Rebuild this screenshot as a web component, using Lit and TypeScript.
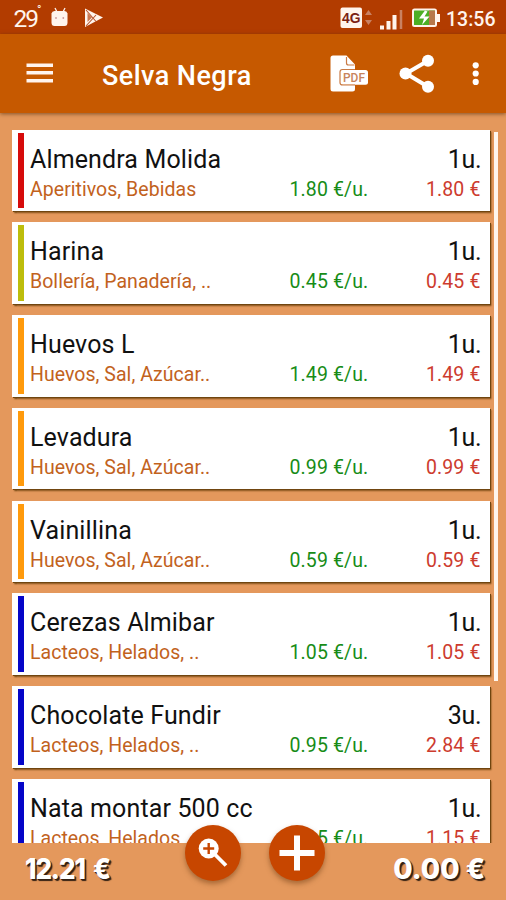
import { LitElement, html, css, svg } from "lit";
import { customElement, property } from "lit/decorators.js";
import { styleMap } from "lit/directives/style-map.js";

interface Item {
  name: string;
  category: string;
  quantity: string;
  unitPrice: string;
  total: string;
  color: string;
}

const EGGS = "Huevos, Sal, Azúcar..";
const DAIRY = "Lacteos, Helados, ..";
const ITEMS: Item[] = [
  { name: "Almendra Molida", category: "Aperitivos, Bebidas", quantity: "1u.", unitPrice: "1.80", total: "1.80", color: "#d60b0b" },
  { name: "Harina", category: "Bollería, Panadería, ..", quantity: "1u.", unitPrice: "0.45", total: "0.45", color: "#bdbd0c" },
  { name: "Huevos L", category: EGGS, quantity: "1u.", unitPrice: "1.49", total: "1.49", color: "#ff9a0c" },
  { name: "Levadura", category: EGGS, quantity: "1u.", unitPrice: "0.99", total: "0.99", color: "#ff9a0c" },
  { name: "Vainillina", category: EGGS, quantity: "1u.", unitPrice: "0.59", total: "0.59", color: "#ff9a0c" },
  { name: "Cerezas Almibar", category: DAIRY, quantity: "1u.", unitPrice: "1.05", total: "1.05", color: "#0505c8" },
  { name: "Chocolate Fundir", category: DAIRY, quantity: "3u.", unitPrice: "0.95", total: "2.84", color: "#0505c8" },
  { name: "Nata montar 500 cc", category: DAIRY, quantity: "1u.", unitPrice: "1.15", total: "1.15", color: "#0505c8" },
];

@customElement("status-bar")
class StatusBar extends LitElement {
  static styles = css`
    :host { display: flex; height: 34px; background: #b23c00; color: #fff4ec; }
    .temp { display: flex; margin: 4px 0 0 13.5px; width: 25px; font: 24.5px/29px "Roboto", sans-serif; letter-spacing: -2px; }
    .deg { font-size: 12px; line-height: 12px; letter-spacing: 0; }
    svg { display: block; flex: none; }
    .left { margin-left: 9.5px; }
    .right { margin-left: auto; }
    .time { margin: 6px 11px 0 6px; width: 49px; font: 500 19.5px/27px "Roboto", sans-serif; white-space: nowrap; }
    .net { font: 700 14px "Liberation Sans", sans-serif; fill: #7a2010; }
  `;
  render() {
    return html`
      <div class="temp"><span>29</span><span class="deg">°</span></div>
      <svg class="left" width="60" height="34" viewBox="48 0 60 34">
        <path d="M55 8l2 4M65 8l-2 4" stroke="#fff4ec" stroke-width="1.3" />
        <path d="M51.500 13.500q.5-2.500 3-2.500h10q2.500 0 3 2.500v9q0 3.500-3 3.500h-10q-3 0-3-3.500z" fill="#fff4ec" />
        <circle cx="56" cy="18" r="0.900" fill="#c99" /><circle cx="63.300" cy="18" r="0.900" fill="#c99" />
        <path d="M85 8.500v18.500l18-9.500z" fill="#fff4ec" />
        <path d="M86 10l10 11.500M86 26l10-11" stroke="#b5532c" stroke-width="1.100" />
        <path d="M87.500 13v9l4.500-4.500z" fill="#c97750" />
      </svg>
      <svg class="right" width="100" height="34" viewBox="335 0 100 34">
        <rect x="335.500" y="7.500" width="21.500" height="20.500" rx="2" fill="#fff4ec" />
        <text class="net" x="337" y="23" textLength="18.500" lengthAdjust="spacingAndGlyphs">4G</text>
        <path d="M360 15l3.500-5 3.500 5zM360 20l3.500 5 3.500-5z" fill="#c98162" />
        <path d="M377 25.500v4M383.500 21v8.500M389.500 15v14.500" stroke="#fff4ec" stroke-width="4" />
        <path d="M396 10v19" stroke="#c98162" stroke-width="2.500" />
        <rect x="408" y="9.500" width="23" height="16.500" rx="1.500" fill="#4caf24" stroke="#fff4ec" stroke-width="2" />
        <rect x="424" y="10.500" width="6" height="14.500" fill="#b7784a" />
        <path d="M432 14h3v8h-3z" fill="#fff4ec" />
        <path d="M420 10.500l-6 8h5l-2 6.500 7.500-8.500h-5l3-5z" fill="#fff" />
      </svg>
      <div class="time">13:56</div>
    `;
  }
}

@customElement("title-bar")
class TitleBar extends LitElement {
  static styles = css`
    :host { display: flex; align-items: center; height: 79px; background: #c65900; color: #fff; box-shadow: 0 1px 4px rgba(80, 45, 15, 0.65); position: relative; z-index: 1; }
    svg { display: block; flex: none; }
    .menu { margin-left: 26px; }
    h1 { margin: 4px 0 0 49px; font: 500 27px/36px "Roboto", sans-serif; letter-spacing: 0.450px; white-space: nowrap; flex: 1; }
    .pdf { font: 500 13.500px "Roboto", sans-serif; fill: #c8845c; }
  `;
  render() {
    return html`
      <svg class="menu" width="27" height="79" viewBox="26 34 27 79">
        <path d="M26.500 65.200h26.700M26.500 72.700h26.700M26.500 80.700h26.700" stroke="#fff4ee" stroke-width="3.600" />
      </svg>
      <h1>Selva Negra</h1>
      <svg width="176" height="79" viewBox="330 34 176 79">
        <path d="M333 55.500h13.500l8.500 9v5h-12q-3 0-3 3v9.500q0 3 3 3h12v4q0 2.500-2.500 2.500h-19.500q-2.500 0-2.500-2.500v-31q0-2.500 2.500-2.500z" fill="#fff" />
        <path d="M346.500 57v6q0 2 2 2h6" fill="none" stroke="#c97a45" stroke-width="1.200" />
        <path d="M339 70h16v14h-16z" fill="#fff" />
        <rect x="340.500" y="70" width="27.500" height="14.800" rx="2.500" fill="#fff" />
        <path d="M355 69.500h-12.500q-2.500 0-2.500 2.500v10.500q0 2.500 2.500 2.500h12.500" fill="none" stroke="#c97a45" stroke-width="1.200" />
        <text class="pdf" x="343" y="82.300" textLength="22" lengthAdjust="spacingAndGlyphs">PDF</text>
        <path d="M428 60.800l-22 12.700 22 13.200" fill="none" stroke="#fff" stroke-width="4" />
        <circle cx="428" cy="60.800" r="6" fill="#fff" /><circle cx="405.500" cy="73.500" r="6" fill="#fff" /><circle cx="428" cy="86.700" r="6" fill="#fff" />
        <circle cx="475.700" cy="65.300" r="3.100" fill="#fff" /><circle cx="475.700" cy="73.500" r="3.100" fill="#fff" /><circle cx="475.700" cy="81.900" r="3.100" fill="#fff" />
      </svg>
    `;
  }
}

@customElement("item-card")
class ItemCard extends LitElement {
  @property({ attribute: false }) item!: Item;
  static styles = css`
    :host { display: flex; box-sizing: border-box; flex: none; height: 81.500px; padding: 3px 9px 3px 6px; background: #fff; box-shadow: 1px 1px 0 #70450f, 1.500px 2px 1.500px #70450f; font-family: "Roboto", sans-serif; white-space: nowrap; }
    .bar { width: 6px; margin-right: 6px; flex: none; }
    .body { flex: 1; display: flex; flex-direction: column; padding-top: 12px; }
    .top { display: flex; justify-content: space-between; font-size: 25px; line-height: 30px; color: #111; letter-spacing: 0.130px; }
    .top .qty { letter-spacing: -0.300px; margin-right: -0.800px; }
    .bottom { display: grid; grid-template-columns: 1fr 79px 112px; font-size: 19.500px; line-height: 30px; }
    .category { color: #c2621d; letter-spacing: 0.040px; }
    .unit { color: #178c17; text-align: left; letter-spacing: 0.120px; }
    .total { color: #cd3b2e; text-align: right; letter-spacing: 0.120px; }
  `;
  render() {
    const i = this.item;
    return html`
      <div class="bar" style=${styleMap({ background: i.color })}></div>
      <div class="body">
        <div class="top"><span>${i.name}</span><span class="qty">${i.quantity}</span></div>
        <div class="bottom">
          <span class="category">${i.category}</span><span class="unit">${i.unitPrice} €/u.</span><span class="total">${i.total} €</span>
        </div>
      </div>
    `;
  }
}

@customElement("app-root")
class AppRoot extends LitElement {
  static styles = css`
    :host { display: flex; flex-direction: column; position: relative; width: 506px; height: 900px; overflow: hidden; background: #e4985c; }
    .list { height: 730px; box-sizing: border-box; overflow: hidden; display: flex; padding: 16.500px 8px 0 12px; gap: 4.500px; }
    .cards { width: 477.500px; display: flex; flex-direction: column; gap: 11.300px; }
    .scroll { width: 4px; height: 549px; margin-top: 2px; background: #fff6ee; }
    .footer { flex: 1; display: flex; justify-content: space-between; padding: 8px 21px 0 25px; font: 800 28px/36px "Inter", sans-serif; color: #fff; text-shadow: 1px 1px 0 #332013, 2px 2px 1px #332013; white-space: nowrap; }
    .spent { letter-spacing: -1.200px; word-spacing: 4px; transform: scaleX(0.93); transform-origin: left; }
    .fabs { position: absolute; left: 185px; top: 825px; display: flex; gap: 28px; }
    .fab { width: 56px; height: 56px; border-radius: 50%; background: #c74600; box-shadow: 0 3px 5px rgba(110, 60, 20, 0.5); }
    .fab svg { display: block; }
  `;
  render() {
    return html`
      <status-bar></status-bar>
      <title-bar></title-bar>
      <div class="list">
        <div class="cards">${ITEMS.map((i) => html`<item-card .item=${i}></item-card>`)}</div>
        <div class="scroll"></div>
      </div>
      <div class="footer"><span class="spent">12.21 €</span><span>0.00 €</span></div>
      <div class="fabs">
        <div class="fab">${this.icon(svg`
          <path d="M30 29.500l11 11" stroke="#fff" stroke-width="3.800" />
          <circle cx="23.700" cy="23.500" r="10" fill="#fff" />
          <path d="M23.700 18v11M18.200 23.500h11" stroke="#c74600" stroke-width="2.400" />`)}</div>
        <div class="fab">${this.icon(svg`
          <path d="M28 10.500v35M10.500 28h35" stroke="#fff" stroke-width="6" />`)}</div>
      </div>
    `;
  }
  icon(content: unknown) {
    return html`<svg width="56" height="56" viewBox="0 0 56 56">${content}</svg>`;
  }
}
